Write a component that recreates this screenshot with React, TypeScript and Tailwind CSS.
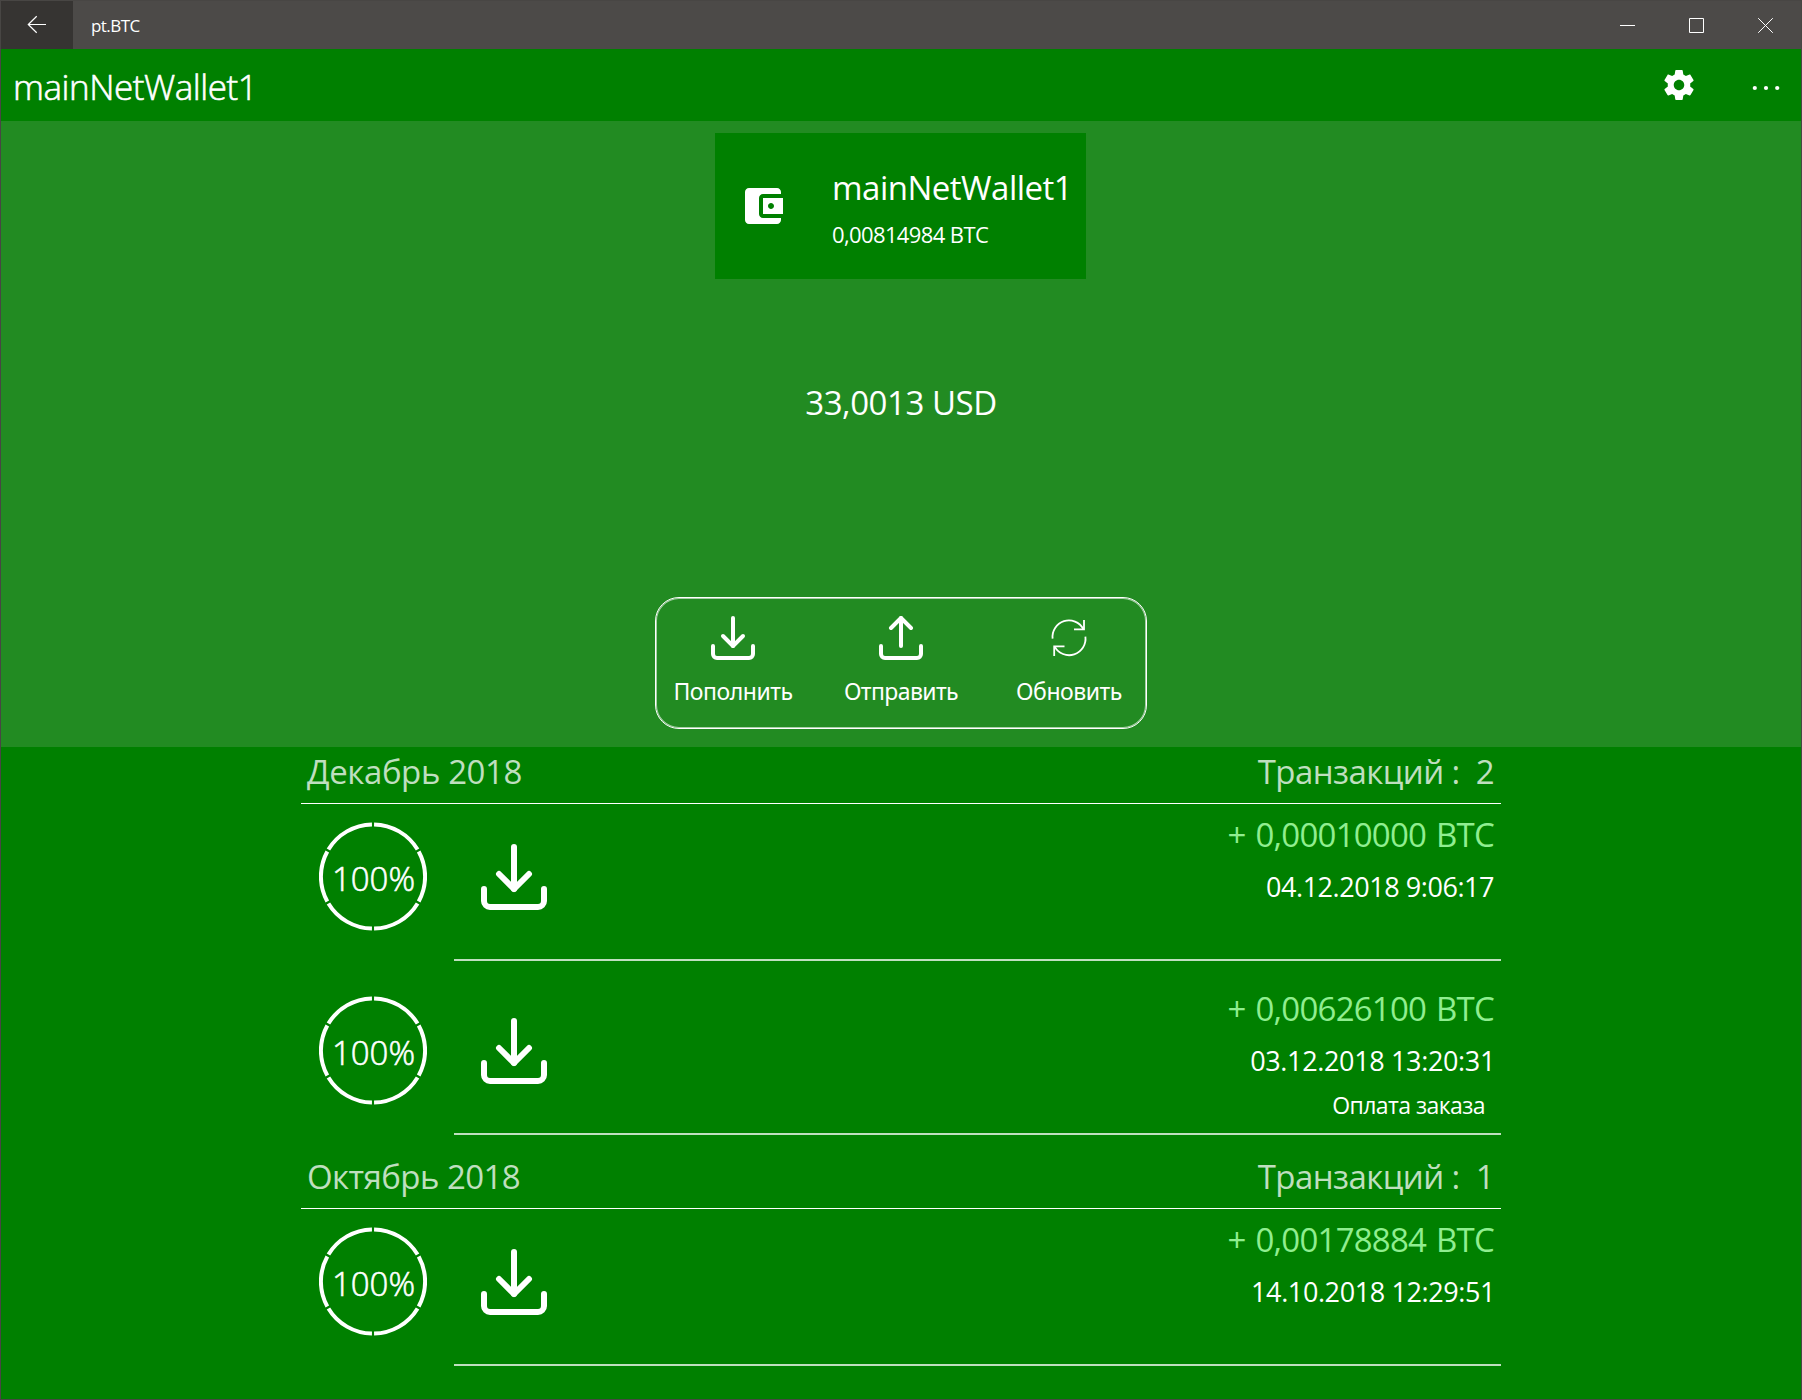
import React from "react";

type Transaction = {
  amount: string;
  date: string;
  dateClass: string;
  note?: string;
};

type MonthGroup = {
  month: string;
  monthClass: string;
  count: string;
  countClass: string;
  items: Transaction[];
};

const groups: MonthGroup[] = [
  {
    month: "Декабрь 2018",
    monthClass: "tracking-[-0.4px]",
    count: "Транзакций :  2",
    countClass: "tracking-[-0.57px]",
    items: [
      { amount: "+ 0,00010000 BTC", date: "04.12.2018 9:06:17", dateClass: "tracking-[-0.45px]" },
      {
        amount: "+ 0,00626100 BTC",
        date: "03.12.2018 13:20:31",
        dateClass: "tracking-[-0.35px] -mr-px",
        note: "Оплата заказа",
      },
    ],
  },
  {
    month: "Октябрь 2018",
    monthClass: "tracking-[-0.56px]",
    count: "Транзакций :  1",
    countClass: "tracking-[-0.57px]",
    items: [
      {
        amount: "+ 0,00178884 BTC",
        date: "14.10.2018 12:29:51",
        dateClass: "tracking-[-0.4px] -mr-px",
      },
    ],
  },
];

function TrayIcon({ up = false, className }: { up?: boolean; className: string }) {
  return (
    <svg
      viewBox="0 0 44 44"
      className={className}
      fill="none"
      stroke="currentColor"
      strokeWidth="4"
      strokeLinecap="round"
      strokeLinejoin="round"
    >
      <path d="M2 30v8a4 4 0 0 0 4 4h32a4 4 0 0 0 4-4v-8" />
      <path d="M22 2v28" />
      <path d={up ? "M12 12L22 2l10 10" : "M12 20l10 10 10-10"} />
    </svg>
  );
}

function RefreshIcon() {
  return (
    <svg viewBox="0 0 40 44" className="h-11 w-10" fill="none" stroke="currentColor" strokeWidth="1.8">
      <path d="M3.6 22.7A16.4 16.4 0 0 1 34.3 13" />
      <path d="M36.4 20.7A16.4 16.4 0 0 1 5.7 30.6" />
      <path d="M35 4v9.4H25" />
      <path d="M5.2 40v-9.6H15.5" />
    </svg>
  );
}

function WalletIcon() {
  return (
    <svg viewBox="0 0 24 24" className="size-12" fill="currentColor">
      <path d="M21 18v1c0 1.1-.9 2-2 2H5c-1.11 0-2-.9-2-2V5c0-1.1.89-2 2-2h14c1.1 0 2 .9 2 2v1h-9c-1.11 0-2 .9-2 2v8c0 1.1.89 2 2 2h9zm-9-2h10V8H12v8zm4-2.5c-.83 0-1.5-.67-1.5-1.5s.67-1.5 1.5-1.5 1.5.67 1.5 1.5-.67 1.5-1.5 1.5z" />
    </svg>
  );
}

function GearIcon() {
  return (
    <svg viewBox="0 0 24 24" className="size-9" fill="currentColor">
      <path d="M19.43 12.98c.04-.32.07-.64.07-.98s-.03-.66-.07-.98l2.11-1.65c.19-.15.24-.42.12-.64l-2-3.46c-.12-.22-.39-.3-.61-.22l-2.49 1c-.52-.4-1.08-.73-1.69-.98l-.38-2.65C14.46 2.18 14.25 2 14 2h-4c-.25 0-.46.18-.49.42l-.38 2.65c-.61.25-1.17.59-1.69.98l-2.49-1c-.23-.09-.49 0-.61.22l-2 3.46c-.13.22-.07.49.12.64l2.11 1.65c-.04.32-.07.65-.07.98s.03.66.07.98l-2.11 1.65c-.19.15-.24.42-.12.64l2 3.46c.12.22.39.3.61.22l2.49-1c.52.4 1.08.73 1.69.98l.38 2.65c.03.24.24.42.49.42h4c.25 0 .46-.18.49-.42l.38-2.65c.61-.25 1.17-.59 1.69-.98l2.49 1c.23.09.49 0 .61-.22l2-3.46c.12-.22.07-.49-.12-.64l-2.11-1.65zM12 15.5c-1.93 0-3.5-1.57-3.5-3.5s1.57-3.5 3.5-3.5 3.5 1.57 3.5 3.5-1.57 3.5-3.5 3.5z" />
    </svg>
  );
}

function TitleBar() {
  return (
    <div className="flex h-12 bg-[#4c4a48]">
      <button className="flex w-[72px] items-start bg-[#363432] pt-3.5 pl-[26px]">
        <svg viewBox="0 0 20 20" className="size-5" fill="none" stroke="currentColor" strokeWidth="1.2">
          <path d="M9.7 1.2L1.3 9.5l8.4 8.3M1.3 9.5H19" />
        </svg>
      </button>
      <span className="pl-[18px] text-[17px] leading-[50px] tracking-[-0.56px]">pt.BTC</span>
      <div className="ml-auto flex pt-[17px] pr-7">
        <svg viewBox="0 0 15 15" className="mr-[54px] size-[15px]" stroke="currentColor" fill="none">
          <path d="M0 7.5h15" />
        </svg>
        <svg viewBox="0 0 15 15" className="mr-[54px] size-[15px]" stroke="currentColor" fill="none">
          <path d="M.5.5h14v14H.5z" />
        </svg>
        <svg viewBox="0 0 15 15" className="size-[15px]" stroke="currentColor" fill="none">
          <path d="M.2.2l14.6 14.6M14.8.2L.2 14.8" />
        </svg>
      </div>
    </div>
  );
}

function PageHeader() {
  return (
    <div className="flex h-[72px] items-start pr-[21px] pl-3">
      <h1 className="text-[35px] leading-[75px] font-light tracking-[-0.46px] [-webkit-text-stroke:0.6px_white]">
        mainNetWallet1
      </h1>
      <div className="mt-[18px] mr-[55px] ml-auto">
        <GearIcon />
      </div>
      <svg viewBox="0 0 28 8" className="mt-[35px] h-2 w-7" fill="currentColor">
        <circle cx="2.8" cy="4" r="2.1" />
        <circle cx="14" cy="4" r="2.1" />
        <circle cx="25.2" cy="4" r="2.1" />
      </svg>
    </div>
  );
}

function ActionButton({ icon, label, className }: { icon: React.ReactNode; label: string; className: string }) {
  return (
    <button className="flex w-[120px] flex-col items-center">
      {icon}
      <span className={`text-[23px] leading-[62px] whitespace-nowrap ${className}`}>{label}</span>
    </button>
  );
}

function BalancePanel() {
  return (
    <section className="flex h-[626px] flex-col items-center bg-[#228b22] pt-3">
      <div className="mr-px flex h-[146px] w-[371px] shrink-0 bg-[#008000]">
        <div className="pt-[49px] pl-6">
          <WalletIcon />
        </div>
        <div className="flex flex-col pt-[31px] pl-[45px] whitespace-nowrap">
          <span className="text-[33px] leading-[48px] tracking-[-0.5px]">mainNetWallet1</span>
          <span className="text-[22px] leading-[45px] tracking-[-0.62px]">0,00814984 BTC</span>
        </div>
      </div>
      <div className="mt-[100px] text-[33px] leading-[48px] tracking-[-0.45px]">33,0013 USD</div>
      <div className="mt-[170px] flex h-[132px] w-[492px] justify-center gap-12 rounded-3xl border border-white pt-[18px] font-['Noto_Sans',sans-serif] inset-ring inset-ring-white/60">
        <ActionButton icon={<TrayIcon className="size-11" />} label="Пополнить" className="tracking-[-0.47px]" />
        <ActionButton icon={<TrayIcon up className="size-11" />} label="Отправить" className="tracking-[-0.58px]" />
        <ActionButton icon={<RefreshIcon />} label="Обновить" className="tracking-[-0.46px]" />
      </div>
    </section>
  );
}

function ConfirmationRing() {
  return (
    <div className="grid h-[109px] w-[108px] shrink-0 grid-rows-[109px] justify-items-center">
      <svg viewBox="0 0 108 109" className="col-start-1 row-start-1 h-[109px] w-[108px]" fill="none">
        <circle
          cx="54"
          cy="54.5"
          r="52.1"
          stroke="currentColor"
          strokeWidth="4"
          pathLength="360"
          strokeDasharray="57.6 2.4"
          strokeDashoffset="-1.2"
          transform="rotate(-90 54 54.5)"
        />
      </svg>
      <span className="col-start-1 row-start-1 self-start pl-px text-[33px] leading-[113px] font-light [-webkit-text-stroke:0.6px_white]">
        100%
      </span>
    </div>
  );
}

function TransactionRow({ tx }: { tx: Transaction }) {
  return (
    <div className="h-[174px]">
      <div className="flex h-[155px] items-start">
        <div className="pt-[18px] pl-[18px]">
          <ConfirmationRing />
        </div>
        <TrayIcon className="mt-10 ml-[54px] size-[66px]" />
        <div className="ml-auto flex flex-col items-end pt-1.5 pr-[7px] whitespace-nowrap">
          <span className="text-[33px] leading-[50px] tracking-[-0.76px] [word-spacing:2px] text-[#90ee90]">
            {tx.amount}
          </span>
          <span className={`text-[27px] leading-[53px] ${tx.dateClass}`}>{tx.date}</span>
          {tx.note && (
            <span className="pr-[9px] text-[23px] leading-9 tracking-[-0.56px]">{tx.note}</span>
          )}
        </div>
      </div>
      <div className="ml-[153px] h-0.5 bg-white/75" />
    </div>
  );
}

function TransactionList() {
  return (
    <section className="mx-auto w-[1200px]">
      {groups.map((group) => (
        <div key={group.month}>
          <div className="flex h-[57px] justify-between border-b border-white pr-[7px] pl-1.5 text-[33px] leading-[50px] whitespace-pre text-white/75">
            <span className={group.monthClass}>{group.month}</span>
            <span className={group.countClass}>{group.count}</span>
          </div>
          {group.items.map((tx) => (
            <TransactionRow key={tx.date} tx={tx} />
          ))}
        </div>
      ))}
    </section>
  );
}

export default function App() {
  return (
    <div className="h-[1400px] w-[1802px] overflow-hidden border border-[#484644] bg-[#008000] font-['Open_Sans',sans-serif] text-white">
      <TitleBar />
      <PageHeader />
      <BalancePanel />
      <TransactionList />
    </div>
  );
}
